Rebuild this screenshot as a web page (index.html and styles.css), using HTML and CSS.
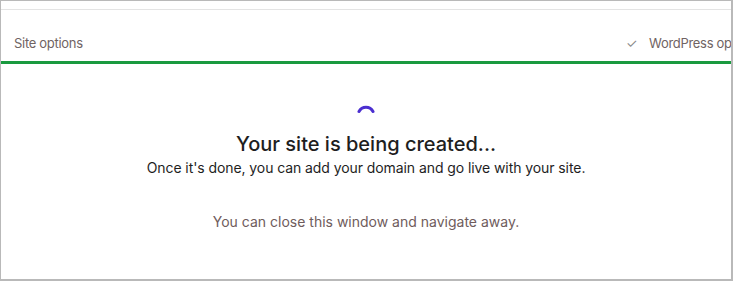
FILE: index.html
```html
<!DOCTYPE html>
<html>
<head>
<meta charset="utf-8">
<link rel="stylesheet" href="styles.css">
</head>
<body>
<div class="frame">
  <div class="topline"></div>
  <div class="tabs">
    <span class="tab">Site options</span>
    <span class="tab done"><span class="check">✓</span>WordPress options</span>
  </div>
  <div class="progress"></div>
  <div class="content">
    <div class="spinner"><svg width="18" height="8" viewBox="0 0 18 8"><path d="M2 6.5 A8 8 0 0 1 16 6.5" fill="none" stroke="#4b2fd0" stroke-width="3" stroke-linecap="round"/></svg></div>
    <h1 class="title">Your site is being created...</h1>
    <p class="sub">Once it's done, you can add your domain and go live with your site.</p>
    <p class="note">You can close this window and navigate away.</p>
  </div>
</div>
</body>
</html>
```
FILE: styles.css
```css
html, body { margin: 0; padding: 0; background: #fff; }
body { font-family: Inter, "Noto Sans", sans-serif; }
.frame {
  width: 733px; height: 281px; box-sizing: border-box;
  border: 1px solid #b9b9b9; border-right-width: 2px; border-bottom-width: 2px;
  overflow: hidden; display: flex; flex-direction: column;
}
.topline { height: 8px; border-bottom: 1px solid #e4e4e4; }
.tabs {
  height: 51px; box-sizing: border-box; display: flex; justify-content: space-between; align-items: flex-end;
  padding: 0 0 10px 13px; white-space: nowrap; font-size: 13px; color: #6f6363;
  letter-spacing: -0.3px;
}
.tab { line-height: 16px; }
.tab.done { margin-right: -29px; }
.check { color: #8a8a8a; margin-right: 12px; font-size: 13px; }
.progress { height: 3px; background: #1a9a3f; }
.content { display: flex; flex-direction: column; align-items: center; }
.spinner { margin-top: 41px; height: 8px; display: flex; }
.title { margin: 19px 0 0; font-size: 20px; font-weight: 500; color: #1e1e1e; line-height: 24px; }
.sub { margin: 3px 0 0; font-size: 14px; color: #1e1e1e; line-height: 18px; letter-spacing: -0.08px; }
.note { margin: 36px 0 0; font-size: 14px; color: #6f5c5c; line-height: 18px; }
```
